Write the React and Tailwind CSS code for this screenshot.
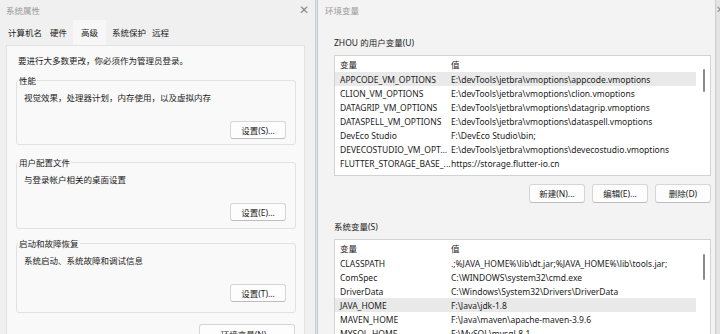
import React from "react";

const userVars = [
    ["APPCODE_VM_OPTIONS", "E:\\devTools\\jetbra\\vmoptions\\appcode.vmoptions"],
    ["CLION_VM_OPTIONS", "E:\\devTools\\jetbra\\vmoptions\\clion.vmoptions"],
    ["DATAGRIP_VM_OPTIONS", "E:\\devTools\\jetbra\\vmoptions\\datagrip.vmoptions"],
    ["DATASPELL_VM_OPTIONS", "E:\\devTools\\jetbra\\vmoptions\\dataspell.vmoptions"],
    ["DevEco Studio", "F:\\DevEco Studio\\bin;"],
    ["DEVECOSTUDIO_VM_OPT...", "E:\\devTools\\jetbra\\vmoptions\\devecostudio.vmoptions"],
    ["FLUTTER_STORAGE_BASE_...", "https://storage.flutter-io.cn"],
];

const sysVars = [
    ["CLASSPATH", ".;%JAVA_HOME%\\lib\\dt.jar;%JAVA_HOME%\\lib\\tools.jar;"],
    ["ComSpec", "C:\\WINDOWS\\system32\\cmd.exe"],
    ["DriverData", "C:\\Windows\\System32\\Drivers\\DriverData"],
    ["JAVA_HOME", "F:\\Java\\jdk-1.8"],
    ["MAVEN_HOME", "F:\\Java\\maven\\apache-maven-3.9.6"],
    ["MYSQL_HOME", "F:\\MySQL\\mysql-8.1"],
    ["NUMBER_OF_PROCESSORS", "16"],
];

const Button = ({ children, className }) => (
    <div className={"flex items-center justify-center bg-[#fdfdfd] border border-[#d6d6d6] border-b-[#bdbdbd] rounded-[3px] text-[#1b1b1b] " + className}>
        {children}
    </div>
);

const Group = ({ title, text, button, className, innerClass }) => (
    <fieldset className={"border border-[#e1e1e1] rounded-[3px] " + className}>
        <legend className="ml-[1px] px-[1px] text-[#1b1b1b]">{title}</legend>
        <div className={"flex flex-col px-[7px] " + innerClass}>
            <div className="text-[#1b1b1b]">{text}</div>
            <Button className="ml-auto mr-[2px] w-[56px] h-[18px] mt-[17px]">{button}</Button>
        </div>
    </fieldset>
);

const VarList = ({ rows, selected, className, thumb }) => (
    <div className={"relative bg-white border border-[#d2d2d2] overflow-hidden " + className}>
        <div className="flex h-[16px] items-center text-[#1b1b1b]">
            <div className="w-[116px] pl-[5px]">变量</div>
            <div>值</div>
        </div>
        {rows.map(([k, v], i) => (
            <div key={k} className={"flex h-[14px] items-center mr-[14px] text-[#1b1b1b] " + (i === selected ? "bg-[#e9e9e9]" : "")}>
                <div className="w-[116px] pl-[5px] whitespace-nowrap overflow-hidden">{k}</div>
                <div className="whitespace-nowrap">{v}</div>
            </div>
        ))}
        <div className={"absolute right-[5px] w-[2px] rounded-full bg-[#8a8a8a] " + thumb} />
    </div>
);

export default function App() {
    return (
        <div className="w-[720px] h-[334px] overflow-hidden flex bg-[#e4e4e4] text-[8.5px] leading-[13px] font-['Noto_Sans','Noto_Sans_CJK_SC',sans-serif]">
            {/* 系统属性 */}
            <div className="w-[316px] shrink-0 flex flex-col bg-[#f0f0f0] border-r border-[#cdcdcd]">
                <div className="h-[20px] shrink-0 flex items-center justify-between pl-[6px] pr-[6px] text-[#9a9a9a]">
                    <span>系统属性</span>
                    <span className="text-[12px] leading-none text-[#8a8a8a]">✕</span>
                </div>
                <div className="h-[25px] shrink-0 flex items-center pl-[8px] text-[#1b1b1b]">
                    <span>计算机名</span>
                    <span className="ml-[8px]">硬件</span>
                    <span className="ml-[6px] px-[8px] h-full flex items-center bg-[#f7f7f7]">高级</span>
                    <span className="ml-[6px]">系统保护</span>
                    <span className="ml-[6px]">远程</span>
                </div>
                <div className="flex-1 ml-[6px] mr-[10px] bg-[#f9f9f9] border-t border-x border-[#e2e2e2] pl-[9px] pr-[8px] pt-[8px] flex flex-col">
                    <div className="ml-[2px] text-[#1b1b1b]">要进行大多数更改，你必须作为管理员登录。</div>
                    <Group className="mt-[7px]" innerClass="pt-[4px] pb-[5px]" title="性能" text="视觉效果，处理器计划，内存使用，以及虚拟内存" button="设置(S)..." />
                    <Group className="mt-[11px]" innerClass="pt-[4px] pb-[7px]" title="用户配置文件" text="与登录帐户相关的桌面设置" button="设置(E)..." />
                    <Group className="mt-[8px]" innerClass="pt-[4px] pb-[10px]" title="启动和故障恢复" text="系统启动、系统故障和调试信息" button="设置(T)..." />
                    <Button className="mt-[11px] ml-auto mr-[1px] w-[96px] h-[20px] shrink-0">环境变量(N)...</Button>
                </div>
            </div>

            {/* 环境变量 */}
            <div className="ml-[1px] w-[399px] shrink-0 flex flex-col bg-[#f3f3f3] border-l border-[#b4c9e0] border-r border-r-[#cdcdcd]">
                <div className="h-[20px] shrink-0 flex items-center pl-[7px] text-[#9a9a9a]">
                    <span>环境变量</span>
                </div>
                <div className="pl-[16px] pr-[4px] flex flex-col">
                    <div className="mt-[16px] text-[#1b1b1b]">ZHOU 的用户变量(U)</div>
                    <VarList rows={userVars} selected={0} className="mt-[6px] h-[121px]" thumb="top-[13px] h-[23px]" />
                    <div className="mt-[8px] flex justify-end gap-[7px]">
                        <Button className="w-[56px] h-[19px]">新建(N)...</Button>
                        <Button className="w-[56px] h-[19px]">编辑(E)...</Button>
                        <Button className="w-[56px] h-[19px]">删除(D)</Button>
                    </div>
                    <div className="mt-[17px] text-[#1b1b1b]">系统变量(S)</div>
                    <VarList rows={sysVars} selected={3} className="mt-[6px] h-[120px]" thumb="top-[14px] h-[26px]" />
                </div>
            </div>
            <div className="flex-1 flex justify-center pt-[4px] text-[10px] leading-none text-[#8a8a8a]">✕</div>
        </div>
    );
}
